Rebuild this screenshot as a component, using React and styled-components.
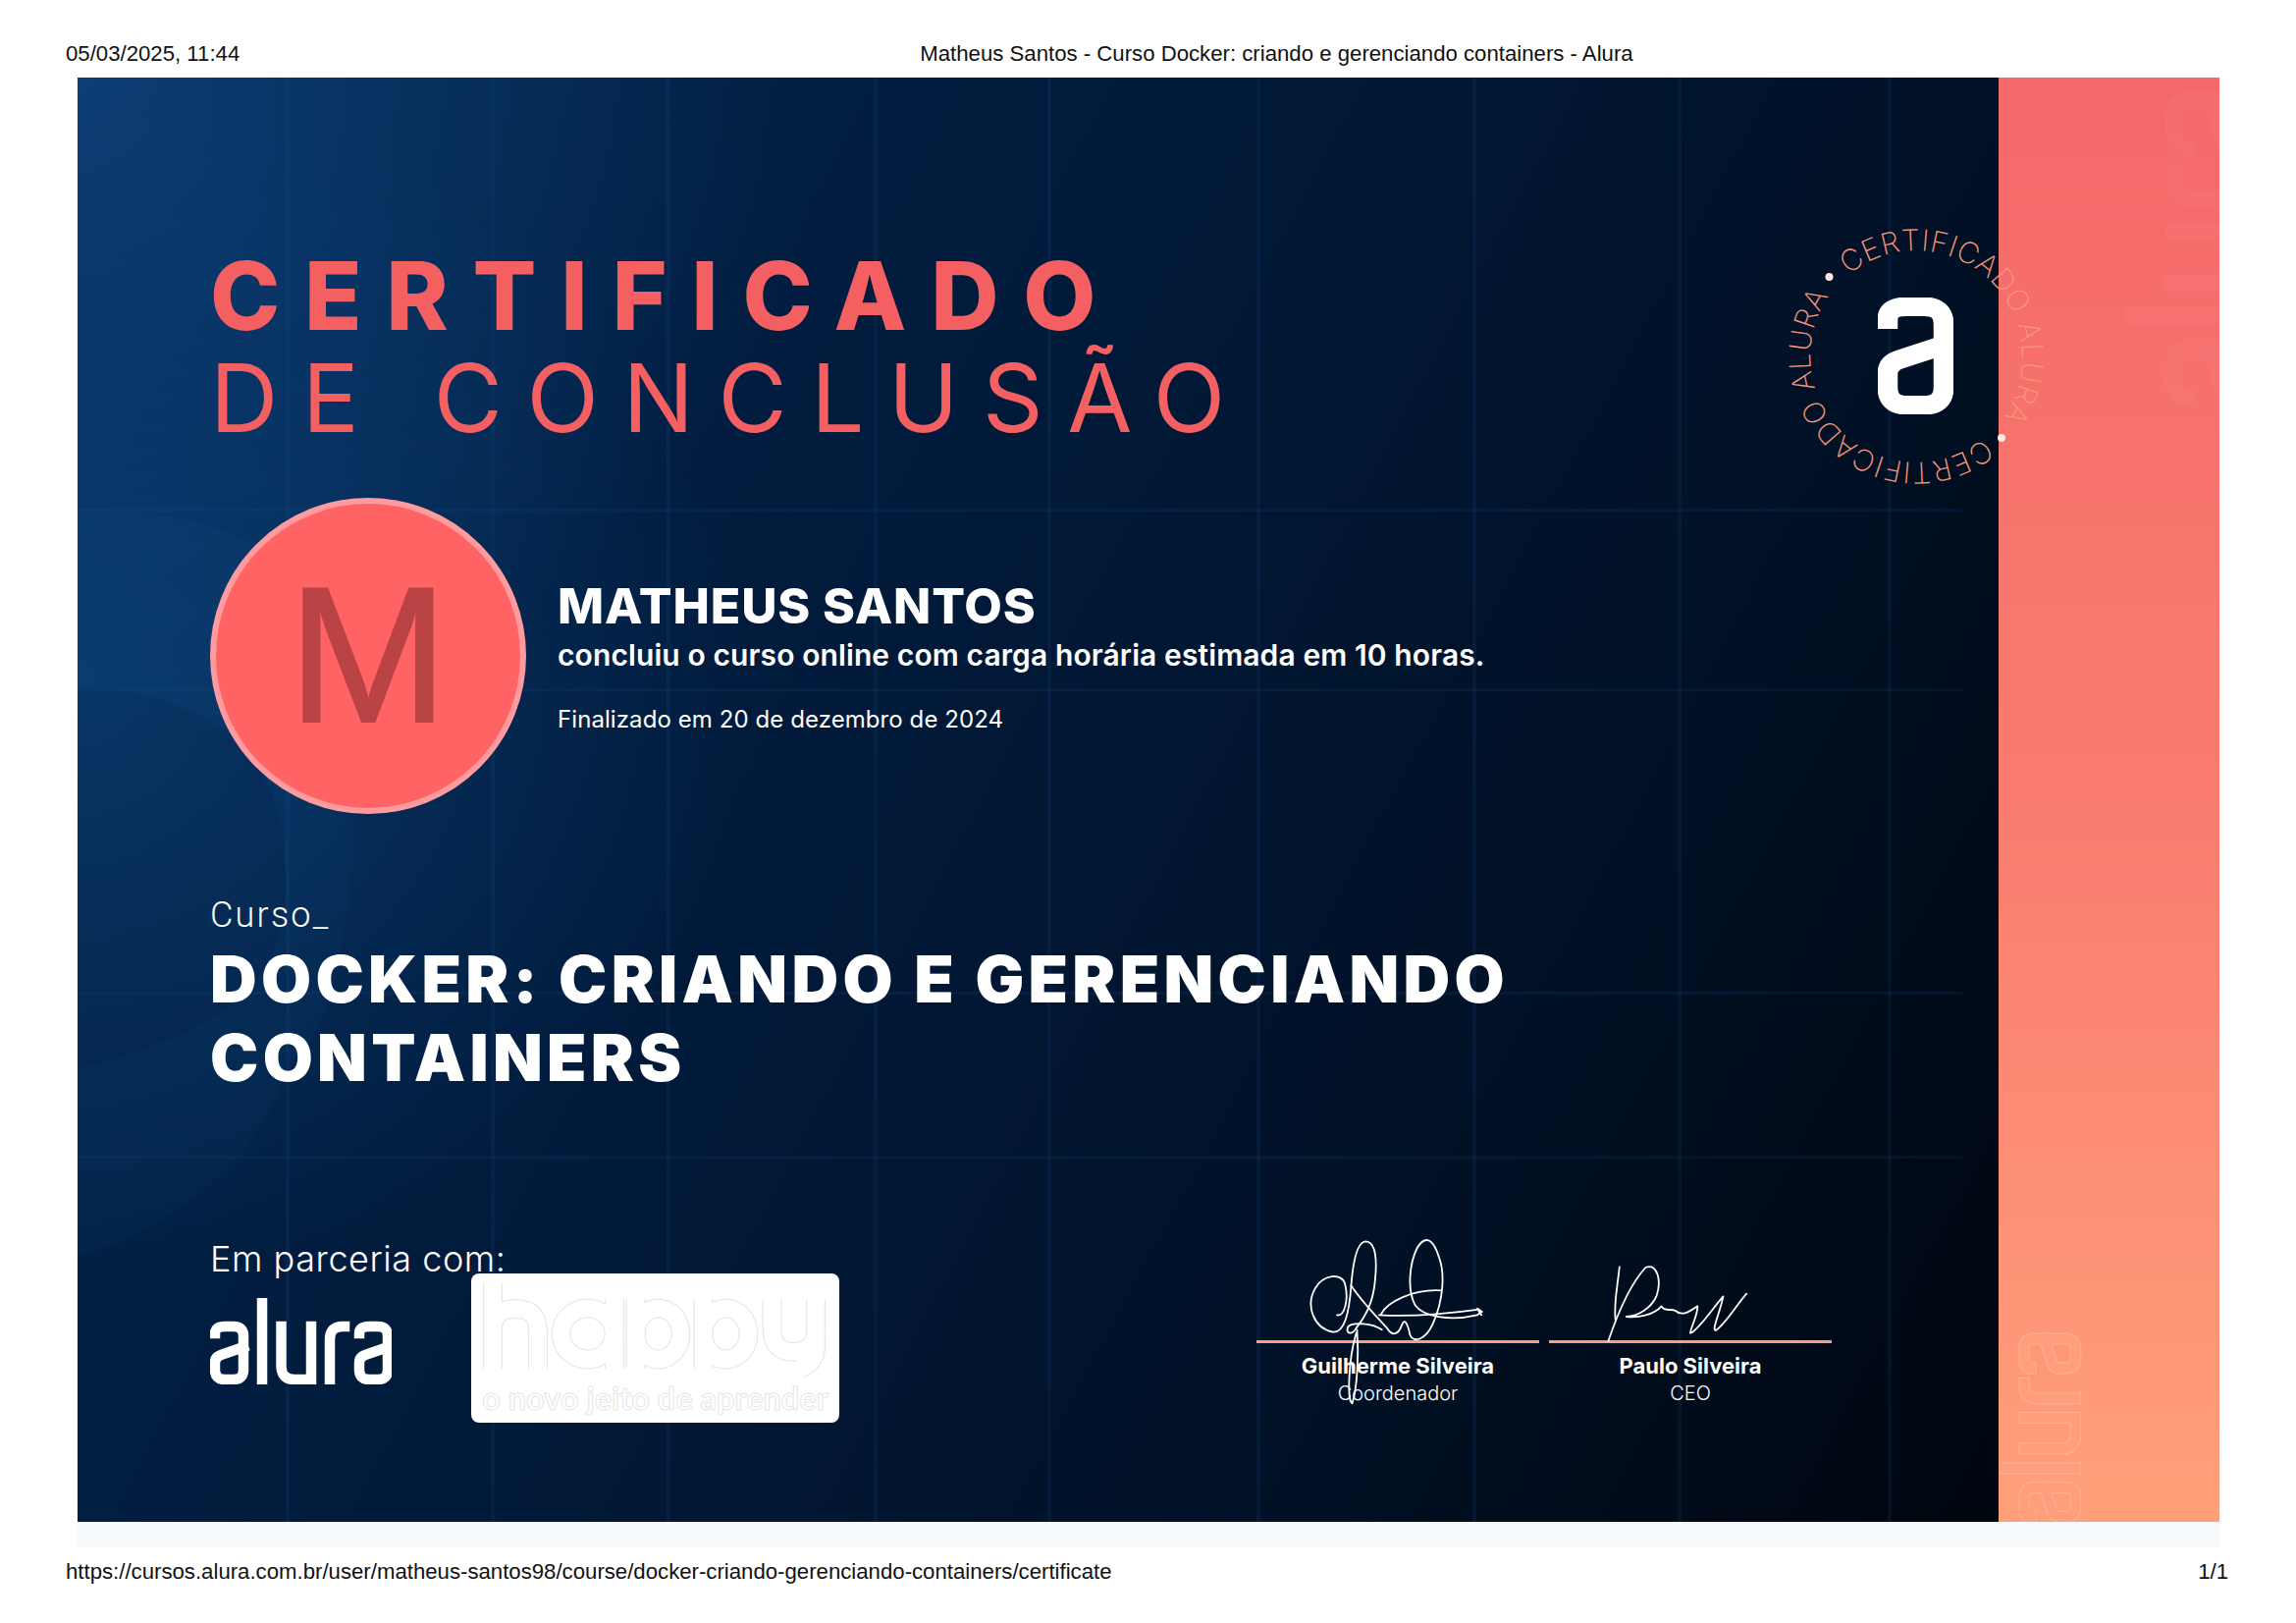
import React from "react";
import styled, { createGlobalStyle } from "styled-components";

const A_BODY = "Q5 29 15 29 H24 Q34 29 34 39 V73 Q34 83 24 83 H15 Q5 83 5 73 V66 Q5 60 11 58 L34 50";
const ALURA_PATHS = [
  `M5 36 ${A_BODY}`,
  "M53 5 V83",
  "M72.5 29 V69 Q72.5 83 86 83 H103 M103 29 V83",
  "M122 83 V42 Q122 29 135 29 H137",
  "M152 36 Q152 29 162 29 H171 Q181 29 181 39 V73 Q181 83 171 83 H162 Q152 83 152 73 V66 Q152 60 158 58 L181 50",
];
const GRID_X = [212, 421, 600, 811, 988, 1201, 1421, 1630, 1844];
const GRID_Y = [439, 622, 931, 1098];
const LINE = "linear-gradient(rgba(24, 78, 140, 0.15), rgba(24, 78, 140, 0.15))";

const GlobalStyle = createGlobalStyle`
  html, body {
    margin: 0;
    background: #fff;
  }
  body {
    font-family: "Inter", "Liberation Sans", sans-serif;
  }
`;

const Page = styled.div`
  width: 2339px;
  height: 1653px;
  overflow: hidden;
  background: #fff;
`;
const PrintHeader = styled.header`
  height: 79px;
  box-sizing: border-box;
  padding: 42px 0 0 67px;
  display: flex;
  font: 22.2px/26px "Liberation Sans", Arial, sans-serif;
  color: #111;
`;
const PrintTitle = styled.span`
  margin-left: 693px;
`;
const PrintFooter = styled.footer`
  height: 50px;
  padding: 0 69px 0 67px;
  display: flex;
  align-items: center;
  justify-content: space-between;
  font: 22.2px/26px "Liberation Sans", Arial, sans-serif;
  color: #111;
`;
const Sheet = styled.div`
  position: relative;
  margin-left: 79px;
  width: 2182px;
  height: 1471px;
  display: flex;
`;
const MainPanel = styled.section`
  position: relative;
  width: 1957px;
  height: 100%;
  padding: 170px 0 0 135px;
  box-sizing: border-box;
  overflow: hidden;
  color: #fff;
  background:
    radial-gradient(680px 620px at 0% 42%, rgba(12, 66, 124, 0.7), rgba(12, 66, 124, 0) 100%),
    radial-gradient(760px 680px at 0% 0%, rgba(13, 64, 120, 0.9), rgba(13, 64, 120, 0) 100%),
    linear-gradient(118deg, #02244a 0%, #011b3c 38%, #011229 68%, #00060f 100%);
`;
const GridLines = styled.div`
  position: absolute;
  inset: 0;
  background-repeat: no-repeat;
  background-image: ${[...GRID_X, ...GRID_Y].map(() => LINE).join(", ")};
  background-size: ${[...GRID_X.map(() => "4px 100%"), ...GRID_Y.map(() => "1920px 3px")].join(", ")};
  background-position: ${[...GRID_X.map((x) => `${x}px 0`), ...GRID_Y.map((y) => `0 ${y}px`)].join(", ")};
`;
const Backdrop = styled.svg`
  position: absolute;
  left: 0;
  top: 0;
`;
const Content = styled.div`
  position: relative;
`;
const Heading = styled.h1`
  margin: 0;
  color: #f45f62;
  font-size: 96px;
  line-height: 104px;
  font-weight: ${(p) => p.$weight};
  letter-spacing: ${(p) => p.$spacing}px;
  white-space: nowrap;
`;
const StudentRow = styled.div`
  display: flex;
  margin-top: 50px;
`;
const Avatar = styled.div`
  width: 322px;
  height: 322px;
  box-sizing: border-box;
  border-radius: 50%;
  border: 6px solid #ff9a9e;
  background: #ff6363;
  color: #b94345;
  display: flex;
  align-items: center;
  justify-content: center;
  font: 196px/1 "Liberation Sans", Arial, sans-serif;
  -webkit-text-stroke: 2px #b94345;
`;
const StudentInfo = styled.div`
  margin-left: 32px;
  padding-top: 80px;
`;
const StudentName = styled.div`
  font-size: 50px;
  line-height: 60px;
  font-weight: 800;
  letter-spacing: 0.85px;
`;
const StudentLine = styled.div`
  font-size: 30px;
  line-height: 40px;
  font-weight: 600;
  letter-spacing: 0.1px;
`;
const FinishedLine = styled.div`
  margin-top: 26px;
  font-size: 24px;
  line-height: 40px;
  font-weight: 400;
  letter-spacing: 0.08px;
`;
const CourseLabel = styled.div`
  margin-top: 84px;
  font: 300 36px/38px "Roboto", "Liberation Mono", monospace;
  letter-spacing: 2.2px;
`;
const CourseTitle = styled.h2`
  margin: 6px 0 0;
  max-width: 1500px;
  font-size: 66px;
  line-height: 80px;
  font-weight: 900;
  letter-spacing: 4.3px;
`;
const BottomRow = styled.div`
  display: flex;
  margin-top: 143px;
`;
const Partners = styled.div`
  flex: 0 0 1066px;
`;
const PartnerLabel = styled.div`
  font-size: 36px;
  line-height: 44px;
  font-weight: 300;
  letter-spacing: 0.55px;
`;
const PartnerLogos = styled.div`
  display: flex;
  align-items: flex-start;
  margin-top: -7px;
`;
const AluraMark = styled.svg`
  margin-top: 25px;
  margin-right: 81px;
  display: block;
`;
const HappyCard = styled.div`
  position: relative;
  width: 375px;
  height: 152px;
  border-radius: 8px;
  background: #fff;
`;
const HappyMark = styled.svg`
  position: absolute;
  left: 0;
  top: 0;
`;
const HappyTagline = styled.div`
  position: absolute;
  left: 0;
  right: 0;
  top: 107px;
  text-align: center;
  white-space: nowrap;
  font: 700 32.5px/40px "Lato", sans-serif;
  color: #fff;
  -webkit-text-stroke: 1px #e6e6e6;
`;
const Signatures = styled.div`
  display: flex;
  gap: 10px;
`;
const SignatureBlock = styled.div`
  position: relative;
  width: 288px;
  padding-top: 105px;
  text-align: center;
`;
const SignatureLine = styled.div`
  height: 3px;
  background: #f4a183;
  margin-bottom: 8px;
`;
const SignerName = styled.div`
  font-size: 22px;
  line-height: 30px;
  font-weight: 700;
`;
const SignerRole = styled.div`
  font-size: 20px;
  line-height: 26px;
  font-weight: 300;
`;
const Scribble = styled.svg`
  position: absolute;
  left: ${(p) => p.$left}px;
  top: -19px;
  pointer-events: none;
`;
const SidePanel = styled.aside`
  position: relative;
  width: 225px;
  height: 100%;
  overflow: hidden;
  background: linear-gradient(180deg, #f5686a 0%, #f97c6f 50%, #ffa07a 100%);
`;
const Watermarks = styled.svg`
  position: absolute;
  left: 0;
  top: 0;
`;
const Seal = styled.svg`
  position: absolute;
  left: 1723px;
  top: 134px;
  overflow: visible;
`;
const SealText = styled.text`
  font-family: "Inter", sans-serif;
  font-weight: 200;
  font-size: 30px;
  fill: #f9957a;
`;
const PaleStrip = styled.div`
  margin-left: 79px;
  width: 2182px;
  height: 26px;
  background: #f6fafd;
`;

function AluraPaths({ color, width }) {
  return (
    <g fill="none" stroke={color} strokeWidth={width} strokeLinecap="square">
      {ALURA_PATHS.map((d) => (
        <path key={d} d={d} />
      ))}
    </g>
  );
}

function Signature({ left, children }) {
  return (
    <Scribble $left={left} width="640" height="220" viewBox="0 0 1568 660" preserveAspectRatio="none">
      <g fill="none" stroke="#fff" strokeWidth="1.8" strokeLinecap="round" strokeLinejoin="round">
        {React.Children.map(children, (line) => React.cloneElement(line, { vectorEffect: "non-scaling-stroke" }))}
      </g>
    </Scribble>
  );
}

function App() {
  return (
    <Page>
      <GlobalStyle />
      <PrintHeader>
        <span>05/03/2025, 11:44</span>
        <PrintTitle>Matheus Santos - Curso Docker: criando e gerenciando containers - Alura</PrintTitle>
      </PrintHeader>
      <Sheet>
        <MainPanel>
          <GridLines />
          <Backdrop width="1957" height="1471" viewBox="0 0 1957 1471">
            <path d="M0 439 C110 439 210 470 262 540 C300 640 290 960 212 1010 C190 1100 100 1170 0 1201 Z" fill="#2a70b8" opacity="0.05" />
            <path d="M0 622 C120 622 200 680 210 780 C220 900 190 960 0 1010 Z" fill="#000c20" opacity="0.1" />
          </Backdrop>
          <Content>
            <Heading $weight={800} $spacing={24.7}>CERTIFICADO</Heading>
            <Heading $weight={400} $spacing={24.6}>DE CONCLUSÃO</Heading>
            <StudentRow>
              <Avatar>M</Avatar>
              <StudentInfo>
                <StudentName>MATHEUS SANTOS</StudentName>
                <StudentLine>concluiu o curso online com carga horária estimada em 10 horas.</StudentLine>
                <FinishedLine>Finalizado em 20 de dezembro de 2024</FinishedLine>
              </StudentInfo>
            </StudentRow>
            <CourseLabel>Curso_</CourseLabel>
            <CourseTitle>DOCKER: CRIANDO E GERENCIANDO CONTAINERS</CourseTitle>
            <BottomRow>
              <Partners>
                <PartnerLabel>Em parceria com:</PartnerLabel>
                <PartnerLogos>
                  <AluraMark width="185" height="88" viewBox="0 0 185 88">
                    <AluraPaths color="#fff" width={10.5} />
                  </AluraMark>
                  <HappyCard>
                    <HappyMark width="375" height="152" viewBox="0 0 375 152">
                      <g fill="none" strokeLinejoin="round">
                        {[
                          ["#e8e8e8", 20],
                          ["#fff", 17.5],
                        ].map(([color, width]) => (
                          <g key={color} stroke={color} strokeWidth={width}>
                            <path d="M22 9 V97 M22 58 Q22 36 45 36 Q68 36 68 58 V97" />
                            <ellipse cx="118.5" cy="61.5" rx="27" ry="26" />
                            <path d="M146 26 V97" />
                            <ellipse cx="190.5" cy="61.5" rx="23" ry="26" />
                            <path d="M167.5 26 V97" />
                            <ellipse cx="259.5" cy="61.5" rx="23" ry="26" />
                            <path d="M236.5 26 V97" />
                            <path d="M306.5 26 V56 Q306.5 80 329 80 Q351 80 351 56 V26 M351 60 V75 Q351 90 335 97" />
                          </g>
                        ))}
                      </g>
                    </HappyMark>
                    <HappyTagline>o novo jeito de aprender</HappyTagline>
                  </HappyCard>
                </PartnerLogos>
              </Partners>
              <Signatures>
                <SignatureBlock>
                  <SignatureLine />
                  <SignerName>Guilherme Silveira</SignerName>
                  <SignerRole>Coordenador</SignerRole>
                  <Signature left={-20}>
                    <path d="M250 295 C268 300 280 250 270 200 C262 165 215 170 195 215 C172 265 190 335 240 347 C268 350 280 290 285 210 C290 130 300 70 322 70 C348 72 350 130 345 190 C340 260 320 300 298 335 C285 360 270 350 278 330 C290 315 340 320 362 340" />
                    <path d="M285 205 C310 250 340 290 375 335 C390 365 405 350 412 325 C420 300 428 330 432 355 C440 380 470 375 490 320 C515 250 520 170 505 120 C490 60 470 50 450 90 C430 140 425 220 445 265 C465 300 530 315 600 295 L612 285 L600 275 L610 295" />
                    <path d="M360 292 C375 255 440 215 510 220" />
                    <path d="M355 295 C420 300 520 292 605 278" />
                    <path d="M300 340 C305 420 300 520 288 565 C275 560 278 430 298 350" />
                  </Signature>
                </SignatureBlock>
                <SignatureBlock>
                  <SignatureLine />
                  <SignerName>Paulo Silveira</SignerName>
                  <SignerRole>CEO</SignerRole>
                  <Signature left={-318}>
                    <path d="M955 148 C950 210 940 260 945 310" />
                    <path d="M927 375 C945 310 975 210 1020 150 C1050 135 1060 190 1048 235 C1035 275 1000 298 972 300 C1000 305 1040 295 1060 268 C1065 285 1085 275 1095 282 C1110 300 1130 285 1150 268 C1150 300 1130 340 1132 350 C1150 345 1190 270 1214 238 C1205 290 1185 340 1195 342 C1215 330 1250 260 1272 230" />
                  </Signature>
                </SignatureBlock>
              </Signatures>
            </BottomRow>
          </Content>
        </MainPanel>
        <SidePanel>
          <Watermarks width="225" height="1471" viewBox="0 0 225 1471">
            <g transform="translate(129 334) rotate(-90) scale(1.72)">
              <AluraPaths color="rgba(255,255,255,0.028)" width={10.5} />
            </g>
            <g transform="translate(-2 1471) rotate(-90) scale(1.03 0.97)">
              <AluraPaths color="#ffad93" width={12} />
              <AluraPaths color="#ff9e7c" width={9.5} />
            </g>
          </Watermarks>
        </SidePanel>
        <Seal width="300" height="300" viewBox="-150 -150 300 300">
          <defs>
            <path id="seal-arc" d="M-66.5 -85 A108 108 0 1 1 -67 85 A108 108 0 0 1 -66.5 -85" />
          </defs>
          <g transform="rotate(-1.5)">
            <SealText>
              <textPath href="#seal-arc" textLength="309" lengthAdjust="spacing">CERTIFICADO ALURA</textPath>
            </SealText>
          </g>
          <g transform="rotate(178.5)">
            <SealText>
              <textPath href="#seal-arc" textLength="309" lengthAdjust="spacing">CERTIFICADO ALURA</textPath>
            </SealText>
          </g>
          <circle cx="-88.5" cy="-81" r="4" fill="#ffe6e2" />
          <circle cx="87" cy="83" r="4" fill="#ffe6e2" />
          <svg x="-39" y="-60" width="77" height="119" viewBox="0 24 39 64" preserveAspectRatio="none">
            <path d={`M5 36 ${A_BODY}`} fill="none" stroke="#fff" strokeWidth="10.5" strokeLinecap="square" />
          </svg>
        </Seal>
      </Sheet>
      <PaleStrip />
      <PrintFooter>
        <span>https://cursos.alura.com.br/user/matheus-santos98/course/docker-criando-gerenciando-containers/certificate</span>
        <span>1/1</span>
      </PrintFooter>
    </Page>
  );
}

export default App;
